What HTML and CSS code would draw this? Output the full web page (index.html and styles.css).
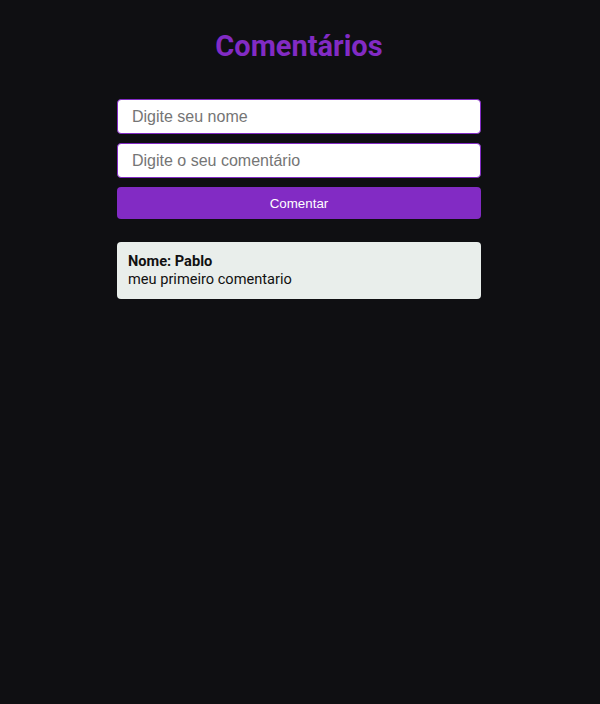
FILE: index.html
```html
<!DOCTYPE html>
<html lang="pt-BR">
<head>
<meta charset="utf-8">
<title>Comentários</title>
<link rel="stylesheet" href="styles.css">
</head>
<body>
<main class="page">
  <h1 class="title">Comentários</h1>
  <form class="form">
    <input class="field" type="text" placeholder="Digite seu nome">
    <input class="field" type="text" placeholder="Digite o seu comentário">
    <button class="btn" type="button">Comentar</button>
  </form>
  <ul class="comments">
    <li class="comment">
      <strong class="comment-name">Nome: Pablo</strong>
      <p class="comment-text">meu primeiro comentario</p>
    </li>
  </ul>
</main>
</body>
</html>
```

FILE: styles.css
```css
html, body {
  margin: 0;
  padding: 0;
  background: #0f0f12;
  min-height: 100%;
}
body {
  font-family: Roboto, "Liberation Sans", sans-serif;
  padding-right: 2px;
}
.page {
  width: 364px;
  margin: 0 auto;
  padding-top: 27px;
}
.title {
  margin: 0;
  text-align: center;
  font-family: Roboto, sans-serif;
  font-weight: 700;
  font-size: 29px;
  line-height: 38px;
  color: #822bc4;
}
.form {
  margin-top: 34px;
  display: flex;
  flex-direction: column;
  gap: 9px;
}
.field {
  box-sizing: border-box;
  height: 35px;
  padding: 0 14px;
  border: 1px solid #822bc4;
  border-radius: 4px;
  background: #fff;
  font-family: "Liberation Sans", Arial, sans-serif;
  font-size: 16px;
  outline: none;
}
.field::placeholder {
  color: #757575;
}
.btn {
  height: 32px;
  border: none;
  border-radius: 4px;
  background: #822bc4;
  color: #fff;
  font-family: "Liberation Sans", Arial, sans-serif;
  font-size: 13.33px;
  cursor: pointer;
}
.comments {
  list-style: none;
  margin: 23px 0 0;
  padding: 0;
}
.comment {
  box-sizing: border-box;
  background: #e9eeeb;
  border-radius: 4px;
  padding: 10px 11px 11px;
  color: #111;
  font-size: 14.6px;
  line-height: 18px;
}
.comment-name {
  display: block;
  font-weight: 700;
}
.comment-text {
  margin: 0;
}
```
